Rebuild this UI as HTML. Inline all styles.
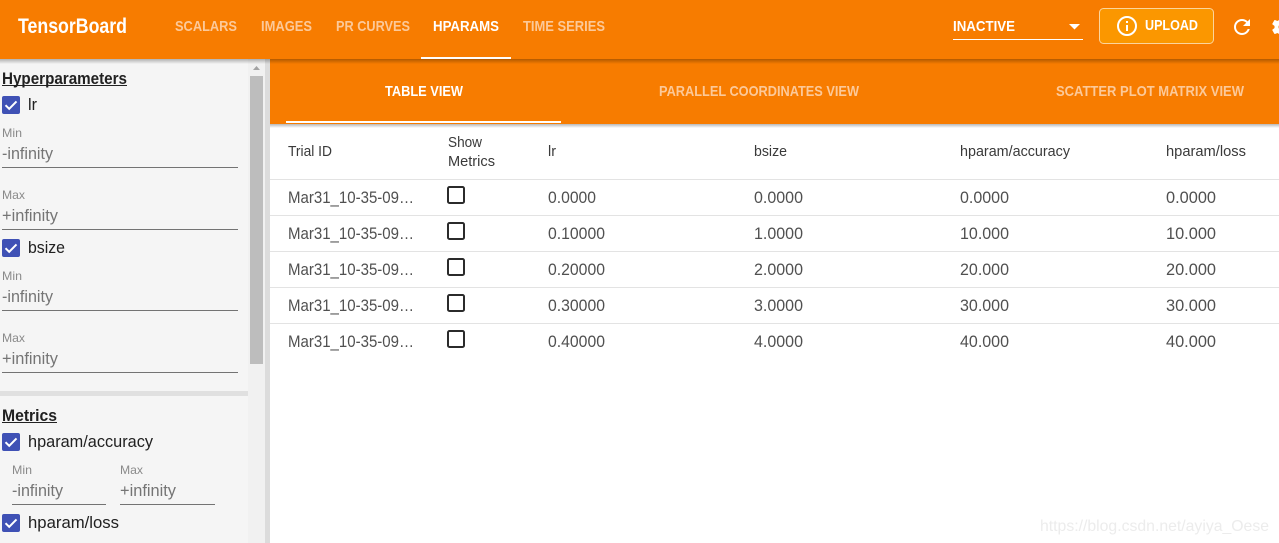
<!DOCTYPE html>
<html><head><meta charset="utf-8"><title>TensorBoard</title>
<style>
html,body{margin:0;padding:0;width:1279px;height:543px;overflow:hidden;background:#fff}
svg{display:block}
text{font-family:"Liberation Sans",Arial,sans-serif}
.b{font-weight:700}
.nav{font-size:15px;font-weight:700;fill:#fcc999}
.w{font-size:15px;font-weight:700;fill:#fff}
.lab{font-size:12px;fill:#8a8a8a}
.inp{font-size:16.500px;fill:#757575}
.chk{font-size:16.500px;fill:#212121}
.h{font-size:14.500px;fill:#3a3a3a}
.c{font-size:16.500px;fill:#505050}
</style></head><body>
<svg width="1279" height="543" viewBox="0 0 1279 543" xmlns="http://www.w3.org/2000/svg" shape-rendering="auto">
<defs>
<linearGradient id="sh" x1="0" y1="0" x2="0" y2="1"><stop offset="0" stop-color="#000" stop-opacity=".28"/><stop offset="1" stop-color="#000" stop-opacity="0"/></linearGradient>
<symbol id="ck" viewBox="0 0 18 18" overflow="visible"><rect width="18" height="18" rx="2" fill="#3f51b5"/><path d="M3.500 9.200l3.700 3.600 7.300-7.400" fill="none" stroke="#fff" stroke-width="2"/></symbol>
</defs>

<!-- sidebar -->
<rect x="0" y="59" width="265" height="484" fill="#f5f5f5"/>
<rect x="265" y="59" width="5" height="484" fill="#dcdcdc"/>
<rect x="248" y="59" width="17" height="484" fill="#f1f1f1"/>
<rect x="250" y="76" width="13" height="288" fill="#bdbdbd"/>
<path d="M256.500 66l3.500 4h-7z" fill="#a3a3a3"/>
<rect x="0" y="391" width="248" height="5" fill="#e0e0e0"/>

<text class="b" x="2" y="84" font-size="16.500" fill="#212121" textLength="125" lengthAdjust="spacingAndGlyphs">Hyperparameters</text>
<rect x="2" y="85" width="125" height="1" fill="#212121"/>
<use href="#ck" x="2" y="96" width="18" height="18"/>
<text class="chk" x="28" y="110" textLength="9" lengthAdjust="spacingAndGlyphs">lr</text>
<text class="lab" x="2" y="137" textLength="20" lengthAdjust="spacingAndGlyphs">Min</text>
<text class="inp" x="2" y="159" textLength="51" lengthAdjust="spacingAndGlyphs">-infinity</text>
<rect x="2" y="167" width="236" height="1" fill="#737373"/>
<text class="lab" x="2" y="199" textLength="23" lengthAdjust="spacingAndGlyphs">Max</text>
<text class="inp" x="2" y="221" textLength="56" lengthAdjust="spacingAndGlyphs">+infinity</text>
<rect x="2" y="229" width="236" height="1" fill="#737373"/>
<use href="#ck" x="2" y="239" width="18" height="18"/>
<text class="chk" x="28" y="253" textLength="37" lengthAdjust="spacingAndGlyphs">bsize</text>
<text class="lab" x="2" y="280" textLength="20" lengthAdjust="spacingAndGlyphs">Min</text>
<text class="inp" x="2" y="302" textLength="51" lengthAdjust="spacingAndGlyphs">-infinity</text>
<rect x="2" y="310" width="236" height="1" fill="#737373"/>
<text class="lab" x="2" y="342" textLength="23" lengthAdjust="spacingAndGlyphs">Max</text>
<text class="inp" x="2" y="364" textLength="56" lengthAdjust="spacingAndGlyphs">+infinity</text>
<rect x="2" y="372" width="236" height="1" fill="#737373"/>

<text class="b" x="2" y="421" font-size="16.500" fill="#212121" textLength="55" lengthAdjust="spacingAndGlyphs">Metrics</text>
<rect x="2" y="422" width="55" height="1" fill="#212121"/>
<use href="#ck" x="2" y="433" width="18" height="18"/>
<text class="chk" x="28" y="447" textLength="125" lengthAdjust="spacingAndGlyphs">hparam/accuracy</text>
<text class="lab" x="12" y="474" textLength="20" lengthAdjust="spacingAndGlyphs">Min</text>
<text class="lab" x="120" y="474" textLength="23" lengthAdjust="spacingAndGlyphs">Max</text>
<text class="inp" x="12" y="496" textLength="51" lengthAdjust="spacingAndGlyphs">-infinity</text>
<text class="inp" x="120" y="496" textLength="56" lengthAdjust="spacingAndGlyphs">+infinity</text>
<rect x="12" y="504" width="94" height="1" fill="#737373"/>
<rect x="120" y="504" width="95" height="1" fill="#737373"/>
<use href="#ck" x="2" y="514" width="18" height="18"/>
<text class="chk" x="28" y="528" textLength="91" lengthAdjust="spacingAndGlyphs">hparam/loss</text>

<!-- tabs band -->
<rect x="270" y="59" width="1009" height="65" fill="#f77c00"/>
<rect x="286" y="121" width="275" height="2" fill="#fff"/>
<rect x="270" y="124" width="1009" height="4" fill="url(#sh)"/>
<text class="w" x="385" y="96" textLength="78" lengthAdjust="spacingAndGlyphs">TABLE VIEW</text>
<text class="nav" x="659" y="96" textLength="200" lengthAdjust="spacingAndGlyphs">PARALLEL COORDINATES VIEW</text>
<text class="nav" x="1056" y="96" textLength="188" lengthAdjust="spacingAndGlyphs">SCATTER PLOT MATRIX VIEW</text>

<!-- header -->
<rect x="0" y="0" width="1279" height="59" fill="#f77c00"/>
<rect x="0" y="59" width="1279" height="5" fill="url(#sh)"/>
<rect x="421" y="57" width="90" height="2" fill="#fff"/>
<text class="b" x="18" y="33" font-size="21" fill="#fff" textLength="109" lengthAdjust="spacingAndGlyphs">TensorBoard</text>
<text class="nav" x="175" y="31" textLength="62" lengthAdjust="spacingAndGlyphs">SCALARS</text>
<text class="nav" x="261" y="31" textLength="51" lengthAdjust="spacingAndGlyphs">IMAGES</text>
<text class="nav" x="336" y="31" textLength="74" lengthAdjust="spacingAndGlyphs">PR CURVES</text>
<text class="w" x="433" y="31" textLength="66" lengthAdjust="spacingAndGlyphs">HPARAMS</text>
<text class="nav" x="523" y="31" textLength="82" lengthAdjust="spacingAndGlyphs">TIME SERIES</text>
<text class="w" x="953" y="31" textLength="62" lengthAdjust="spacingAndGlyphs">INACTIVE</text>
<rect x="953" y="39" width="130" height="1" fill="#fff"/>
<path d="M1069 24h11l-5.500 5.500z" fill="#fff"/>
<rect x="1099.500" y="8.500" width="114" height="35" rx="4" fill="#fb9700" stroke="#fcd49c"/>
<circle cx="1127" cy="26" r="9" fill="none" stroke="#fff" stroke-width="2"/>
<rect x="1126" y="25" width="2" height="6" fill="#fff"/><rect x="1126" y="21" width="2" height="2" fill="#fff"/>
<text class="w" x="1145" y="30" textLength="53" lengthAdjust="spacingAndGlyphs">UPLOAD</text>
<path transform="translate(1230 15)" fill="#fff" d="M17.650 6.350C16.200 4.900 14.210 4 12 4c-4.420 0-7.990 3.580-7.990 8s3.570 8 7.990 8c3.730 0 6.840-2.550 7.730-6h-2.080c-.82 2.330-3.040 4-5.650 4-3.310 0-6-2.690-6-6s2.690-6 6-6c1.660 0 3.140.69 4.220 1.780L13 11h7V4l-2.350 2.350z"/>
<path transform="translate(1270 15)" fill="#fff" d="M19.430 12.980c.04-.32.07-.64.07-.98s-.03-.66-.07-.98l2.110-1.650c.19-.15.24-.42.12-.64l-2-3.460c-.12-.22-.39-.3-.61-.22l-2.490 1c-.52-.4-1.080-.73-1.690-.98l-.38-2.650C14.460 2.180 14.250 2 14 2h-4c-.25 0-.46.18-.49.42l-.38 2.650c-.61.25-1.170.59-1.690.98l-2.490-1c-.23-.09-.49 0-.61.22l-2 3.460c-.13.22-.07.49.12.64l2.110 1.650c-.04.32-.07.65-.07.98s.03.66.07.98l-2.110 1.650c-.19.15-.24.42-.12.64l2 3.460c.12.22.39.3.61.22l2.490-1c.52.4 1.080.73 1.690.98l.38 2.650c.03.24.24.42.49.42h4c.25 0 .46-.18.49-.42l.38-2.650c.61-.25 1.170-.59 1.690-.98l2.490 1c.23.09.49 0 .61-.22l2-3.460c.12-.22.07-.49-.12-.64l-2.110-1.650zM12 15.500c-1.930 0-3.500-1.570-3.500-3.500s1.570-3.500 3.500-3.500 3.500 1.570 3.500 3.500-1.570 3.500-3.500 3.500z"/>

<!-- table -->
<text class="h" x="288" y="156" textLength="44" lengthAdjust="spacingAndGlyphs">Trial ID</text>
<text class="h" x="448" y="147" textLength="34" lengthAdjust="spacingAndGlyphs">Show</text>
<text class="h" x="448" y="166" textLength="47" lengthAdjust="spacingAndGlyphs">Metrics</text>
<text class="h" x="548" y="156" textLength="8" lengthAdjust="spacingAndGlyphs">lr</text>
<text class="h" x="754" y="156" textLength="33" lengthAdjust="spacingAndGlyphs">bsize</text>
<text class="h" x="960" y="156" textLength="110" lengthAdjust="spacingAndGlyphs">hparam/accuracy</text>
<text class="h" x="1166" y="156" textLength="80" lengthAdjust="spacingAndGlyphs">hparam/loss</text>
<g fill="#e3e3e3"><rect x="270" y="179" width="1009" height="1"/><rect x="270" y="215" width="1009" height="1"/><rect x="270" y="251" width="1009" height="1"/><rect x="270" y="287" width="1009" height="1"/><rect x="270" y="323" width="1009" height="1"/></g>
<g fill="none" stroke="#2b2b2b" stroke-width="2"><rect x="448" y="187" width="16" height="16" rx="1.500"/><rect x="448" y="223" width="16" height="16" rx="1.500"/><rect x="448" y="259" width="16" height="16" rx="1.500"/><rect x="448" y="295" width="16" height="16" rx="1.500"/><rect x="448" y="331" width="16" height="16" rx="1.500"/></g>

<text class="c" x="288" y="203" textLength="126" lengthAdjust="spacingAndGlyphs">Mar31_10-35-09…</text>
<text class="c" x="548" y="203" textLength="48" lengthAdjust="spacingAndGlyphs">0.0000</text>
<text class="c" x="754" y="203" textLength="49" lengthAdjust="spacingAndGlyphs">0.0000</text>
<text class="c" x="960" y="203" textLength="49" lengthAdjust="spacingAndGlyphs">0.0000</text>
<text class="c" x="1166" y="203" textLength="50" lengthAdjust="spacingAndGlyphs">0.0000</text>

<text class="c" x="288" y="239" textLength="126" lengthAdjust="spacingAndGlyphs">Mar31_10-35-09…</text>
<text class="c" x="548" y="239" textLength="57" lengthAdjust="spacingAndGlyphs">0.10000</text>
<text class="c" x="754" y="239" textLength="49" lengthAdjust="spacingAndGlyphs">1.0000</text>
<text class="c" x="960" y="239" textLength="49" lengthAdjust="spacingAndGlyphs">10.000</text>
<text class="c" x="1166" y="239" textLength="50" lengthAdjust="spacingAndGlyphs">10.000</text>

<text class="c" x="288" y="275" textLength="126" lengthAdjust="spacingAndGlyphs">Mar31_10-35-09…</text>
<text class="c" x="548" y="275" textLength="57" lengthAdjust="spacingAndGlyphs">0.20000</text>
<text class="c" x="754" y="275" textLength="49" lengthAdjust="spacingAndGlyphs">2.0000</text>
<text class="c" x="960" y="275" textLength="49" lengthAdjust="spacingAndGlyphs">20.000</text>
<text class="c" x="1166" y="275" textLength="50" lengthAdjust="spacingAndGlyphs">20.000</text>

<text class="c" x="288" y="311" textLength="126" lengthAdjust="spacingAndGlyphs">Mar31_10-35-09…</text>
<text class="c" x="548" y="311" textLength="57" lengthAdjust="spacingAndGlyphs">0.30000</text>
<text class="c" x="754" y="311" textLength="49" lengthAdjust="spacingAndGlyphs">3.0000</text>
<text class="c" x="960" y="311" textLength="49" lengthAdjust="spacingAndGlyphs">30.000</text>
<text class="c" x="1166" y="311" textLength="50" lengthAdjust="spacingAndGlyphs">30.000</text>

<text class="c" x="288" y="347" textLength="126" lengthAdjust="spacingAndGlyphs">Mar31_10-35-09…</text>
<text class="c" x="548" y="347" textLength="57" lengthAdjust="spacingAndGlyphs">0.40000</text>
<text class="c" x="754" y="347" textLength="49" lengthAdjust="spacingAndGlyphs">4.0000</text>
<text class="c" x="960" y="347" textLength="49" lengthAdjust="spacingAndGlyphs">40.000</text>
<text class="c" x="1166" y="347" textLength="50" lengthAdjust="spacingAndGlyphs">40.000</text>

<text x="1040" y="531" font-size="16" fill="#ececec" textLength="229" lengthAdjust="spacingAndGlyphs">https://blog.csdn.net/ayiya_Oese</text>
</svg>
</body></html>
